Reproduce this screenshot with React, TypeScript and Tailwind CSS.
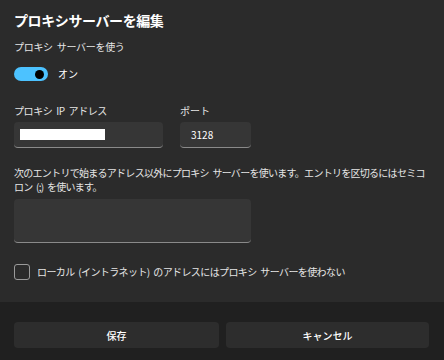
const font = { fontFamily: '"Noto Sans CJK JP", "Noto Sans", sans-serif' };

export default function App() {
  return (
    <div className="w-[444px] h-[360px] flex flex-col bg-[#2b2b2b] text-white overflow-hidden" style={font}>
      <div className="flex-1 flex flex-col px-[14px] pt-[10px]">
        <h1 className="text-[14px] leading-[20px] font-bold tracking-[-0.4px]">プロキシサーバーを編集</h1>
        <div className="mt-[10px] text-[10px] leading-[14px] text-[#e6e6e6] tracking-[-0.3px] [word-spacing:2px]">プロキシ サーバーを使う</div>
        <div className="mt-[13px] flex items-center gap-[10px]">
          <div className="w-[34px] h-[14px] rounded-full bg-[#4cc2ff] flex items-center justify-end pr-[4px]">
            <div className="w-[9px] h-[9px] rounded-full bg-black" />
          </div>
          <span className="text-[10px] leading-[14px]">オン</span>
        </div>

        <div className="mt-[23px] flex gap-[17px]">
          <div className="flex flex-col">
            <span className="text-[10px] leading-[14px] text-[#e6e6e6] tracking-[-0.4px] [word-spacing:2px]">プロキシ IP アドレス</span>
            <div className="mt-[4px] w-[149px] h-[26px] rounded-[4px] bg-[#363636] border-b border-[#8a8a8a] flex items-center px-[6px]">
              <div className="w-[85px] h-[11px] bg-white" />
            </div>
          </div>
          <div className="flex flex-col">
            <span className="text-[10px] leading-[14px] text-[#e6e6e6]">ポート</span>
            <div className="mt-[4px] w-[71px] h-[26px] rounded-[4px] bg-[#363636] border-b border-[#8a8a8a] flex items-center px-[11px] text-[10px]">
              3128
            </div>
          </div>
        </div>

        <p className="mt-[18px] text-[10px] leading-[14px] text-[#e6e6e6] tracking-[-0.72px] [word-spacing:2px] whitespace-nowrap">
          次のエントリで始まるアドレス以外にプロキシ サーバーを使います。エントリを区切るにはセミコ
          <br />
          ロン (;) を使います。
        </p>
        <div className="mt-[5px] w-[237px] h-[44px] rounded-[4px] bg-[#363636] border-b border-[#8a8a8a]" />

        <div className="mt-[21px] flex items-center gap-[7px]">
          <div className="w-[16px] h-[16px] rounded-[3px] border border-[#9a9a9a]" />
          <span className="text-[10px] leading-[14px] text-[#e6e6e6] tracking-[-0.6px] [word-spacing:2px]">ローカル (イントラネット) のアドレスにはプロキシ サーバーを使わない</span>
        </div>
      </div>

      <div className="h-[58px] bg-[#202020] flex gap-[7px] px-[14px] pt-[20px]">
        <button className="w-[205px] h-[26px] rounded-[4px] bg-[#2d2d2d] text-[10px] font-medium" style={font}>保存</button>
        <button className="w-[203px] h-[26px] rounded-[4px] bg-[#2d2d2d] text-[10px] font-medium" style={font}>キャンセル</button>
      </div>
    </div>
  );
}
